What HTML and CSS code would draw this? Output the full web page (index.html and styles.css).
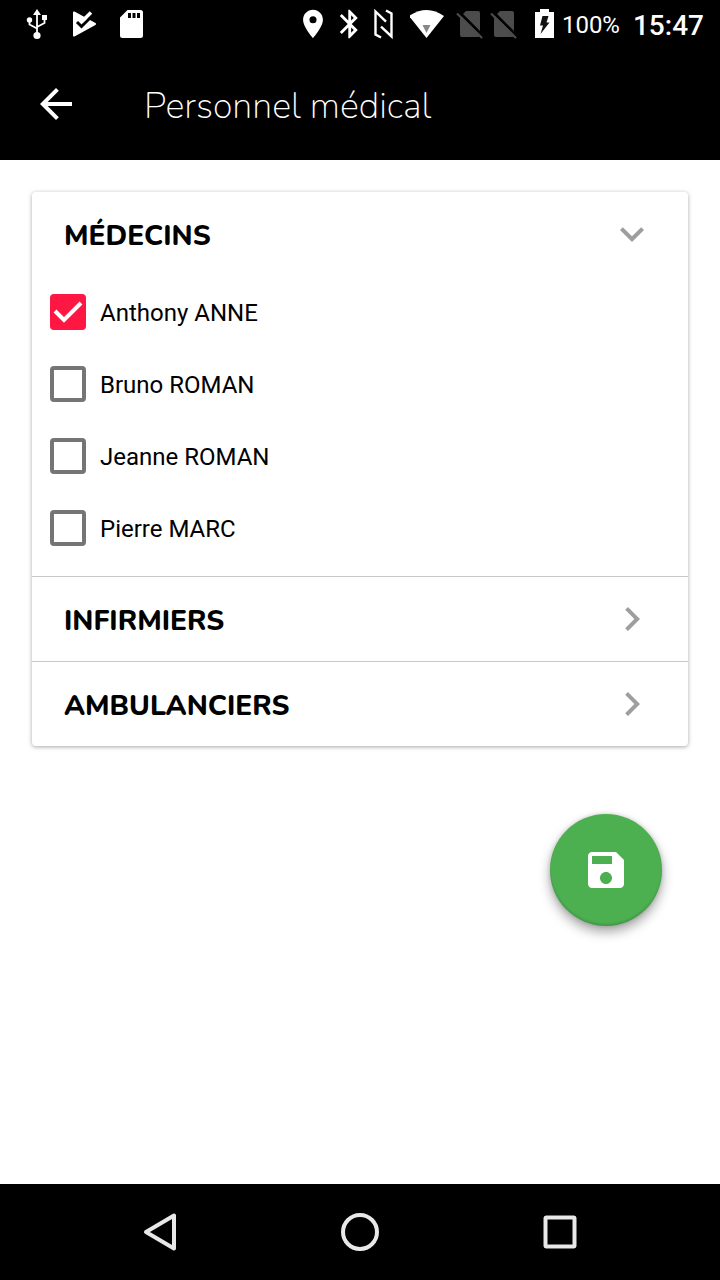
FILE: index.html
```html
<!DOCTYPE html>
<html lang="fr">

<head>
    <meta charset="UTF-8">
    <meta name="viewport" content="width=device-width, initial-scale=1.0">
    <title>Personnel médical</title>
    <link rel="stylesheet" href="styles.css">
</head>

<body>
    <div class="status-bar">
        <div class="notifications">
            <svg class="status-icon" viewBox="0 0 34 34">
                <path d="M17 2l4 6h-8z" fill="#fff"/>
                <path d="M17 6v22M9.500 13v4.500L17 21.500M24.500 11v5L17 20" fill="none" stroke="#fff" stroke-width="1.800"/>
                <circle cx="17" cy="28.500" r="3.600" fill="#fff"/>
                <circle cx="9.500" cy="13" r="2.700" fill="#fff"/>
                <path d="M22 8h5v5h-5z" fill="#fff"/>
            </svg>
            <svg class="status-icon" viewBox="0 0 34 34">
                <path d="M7 5.500L28 17 7 28.500z" fill="#fff" stroke="#fff" stroke-width="2" stroke-linejoin="round"/>
                <path d="M10 15l4.500 4.500L26 8" fill="none" stroke="#000" stroke-width="3"/>
                <path d="M14.500 14.800L24 5.500" fill="none" stroke="#fff" stroke-width="3.500"/>
            </svg>
            <svg class="status-icon" viewBox="0 0 34 34">
                <path fill="#fff" fill-rule="evenodd" d="M13.500 3H26.500Q29 3 29 5.500V28.500Q29 31 26.500 31H8.500Q6 31 6 28.500V10.500zM14 6v5h3V6zM18.500 6v5h3V6zM23 6v5h3V6z"/>
            </svg>
        </div>
        <div class="system">
            <div class="icon-group">
                <svg class="status-icon" viewBox="0 0 24 24">
                    <path fill="#fff" d="M12 2C8.130 2 5 5.130 5 9c0 5.250 7 13 7 13s7-7.750 7-13c0-3.870-3.130-7-7-7zm0 9.500a2.500 2.500 0 0 1 0-5 2.500 2.500 0 0 1 0 5z"/>
                </svg>
                <svg class="status-icon" viewBox="-0.500 0 24 24">
                    <path fill="#fff" d="M17.710 7.710L12 2h-1v7.590L6.410 5 5 6.410 10.590 12 5 17.590 6.410 19 11 14.410V22h1l5.710-5.710-4.300-4.290 4.300-4.290zM13 5.830l1.880 1.880L13 9.590V5.830zm1.880 10.460L13 18.170v-3.760l1.880 1.880z"/>
                </svg>
                <svg class="status-icon" viewBox="0 0 34 34">
                    <path d="M18 14.700L7.500 4.500V27.500L13 30.500M13 19.700L23.500 29.500V6.500L18 3.500" fill="none" stroke="#fff" stroke-width="2.400"/>
                </svg>
            </div>
            <svg class="status-icon" viewBox="0 0 34 34">
                <path d="M-1 9Q17-3 34 9L16.500 31z" fill="#fff"/>
                <path d="M12.500 18h8l-4 8z" fill="#888"/>
            </svg>
            <div class="icon-group sims">
                <svg class="status-icon" viewBox="0 0 34 34">
                    <path d="M14 4H26Q28 4 28 6V28Q28 30 26 30H10Q8 30 8 28V10z" fill="#4c4c4c"/>
                    <path d="M7 5L31 29" stroke="#000" stroke-width="3"/>
                    <path d="M5 6.500L30 31" stroke="#4c4c4c" stroke-width="2.200"/>
                </svg>
                <svg class="status-icon" viewBox="0 0 34 34">
                    <path d="M14 4H26Q28 4 28 6V28Q28 30 26 30H10Q8 30 8 28V10z" fill="#4c4c4c"/>
                    <path d="M7 5L31 29" stroke="#000" stroke-width="3"/>
                    <path d="M5 6.500L30 31" stroke="#4c4c4c" stroke-width="2.200"/>
                </svg>
            </div>
            <div class="battery">
                <svg class="status-icon" viewBox="0 0 34 34">
                    <path d="M7 5h5V2h9v3h5v26H7z" fill="#fff"/>
                    <path d="M14.500 9h6l-2 6.500h3L12.500 27l2.500-8.500h-3z" fill="#111"/>
                </svg>
                <span class="level">100%</span>
            </div>
            <span class="clock">15:47</span>
        </div>
    </div>

    <header class="app-bar">
        <button class="back" type="button" aria-label="Retour">
            <svg viewBox="0 0 24 24"><path fill="#fff" d="M20 11H7.830l5.590-5.590L12 4l-8 8 8 8 1.410-1.410L7.830 13H20v-2z"/></svg>
        </button>
        <h1>Personnel médical</h1>
    </header>

    <main>
        <form id="staffForm">
            <div class="card">
                <details open>
                    <summary>
                        <h2>MÉDECINS</h2>
                        <svg class="chevron" viewBox="0 0 24 24"><path d="M16.590 8.590L12 13.170 7.410 8.590 6 10l6 6 6-6z"/></svg>
                    </summary>
                    <div class="people">
                        <label><input type="checkbox" name="medecin" value="anne" checked><span>Anthony ANNE</span></label>
                        <label><input type="checkbox" name="medecin" value="broman"><span>Bruno ROMAN</span></label>
                        <label><input type="checkbox" name="medecin" value="jroman"><span>Jeanne ROMAN</span></label>
                        <label><input type="checkbox" name="medecin" value="marc"><span>Pierre MARC</span></label>
                    </div>
                </details>
                <details>
                    <summary>
                        <h2>INFIRMIERS</h2>
                        <svg class="chevron" viewBox="0 0 24 24"><path d="M10 6L8.590 7.410 13.170 12l-4.580 4.590L10 18l6-6z"/></svg>
                    </summary>
                </details>
                <details>
                    <summary>
                        <h2>AMBULANCIERS</h2>
                        <svg class="chevron" viewBox="0 0 24 24"><path d="M10 6L8.590 7.410 13.170 12l-4.580 4.590L10 18l6-6z"/></svg>
                    </summary>
                </details>
            </div>
            <button class="save" type="submit" aria-label="Enregistrer">
                <svg viewBox="0 0 24 24"><path fill="#fff" d="M17 3H5c-1.110 0-2 .9-2 2v14c0 1.100.89 2 2 2h14c1.100 0 2-.9 2-2V7l-4-4zm-5 16c-1.660 0-3-1.340-3-3s1.340-3 3-3 3 1.340 3 3-1.340 3-3 3zm3-10H5V5h10v4z"/></svg>
            </button>
        </form>
    </main>

    <nav class="nav-bar">
        <button type="button" aria-label="Précédent">
            <svg viewBox="0 0 48 48"><path d="M10 24L38 7.500V40.500z"/></svg>
        </button>
        <button type="button" aria-label="Accueil">
            <svg viewBox="0 0 48 48"><circle cx="24" cy="24" r="17"/></svg>
        </button>
        <button type="button" aria-label="Applications">
            <svg viewBox="0 0 48 48"><rect x="9.500" y="9.500" width="29" height="29" rx="1"/></svg>
        </button>
    </nav>
</body>

</html>
```
FILE: styles.css
```css
* {
    box-sizing: border-box;
}

body {
    display: flex;
    flex-direction: column;
    min-height: 100vh;
    margin: 0;
    background-color: #fff;
    color: #000;
    font-family: Roboto, sans-serif;
}

button {
    display: flex;
    align-items: center;
    justify-content: center;
    border: none;
    padding: 0;
    background: none;
    cursor: pointer;
}

h1,
h2 {
    margin: 0;
    padding-top: 4px;
    font-family: Nunito, "Open Sans", sans-serif;
}

/* Status bar */
.status-bar {
    display: flex;
    justify-content: space-between;
    height: 48px;
    padding: 0 16px 0 20px;
    background-color: #000;
    color: #fff;
}

.notifications,
.system,
.icon-group,
.battery {
    display: flex;
    align-items: center;
}

.notifications {
    gap: 13px;
}

.system {
    gap: 8px;
}

.icon-group {
    gap: 2px;
}

.sims {
    gap: 0;
}

.status-icon {
    width: 34px;
    height: 34px;
}

.level {
    padding-top: 2px;
    font-size: 24px;
}

.clock {
    padding: 2px 0 0 5px;
    font-size: 28px;
    font-weight: 500;
}

/* App bar */
.app-bar {
    display: flex;
    align-items: center;
    gap: 64px;
    height: 112px;
    padding: 0 32px;
    background-color: #000;
    color: #fff;
}

.back svg {
    width: 48px;
    height: 48px;
}

.app-bar h1 {
    font-size: 36px;
    font-weight: 200;
}

/* Staff list */
main {
    flex: 1;
    padding: 32px;
}

.card {
    border-radius: 4px;
    background-color: #fff;
    box-shadow: 0 1px 4px rgba(0, 0, 0, 0.35);
}

details + details {
    border-top: 1px solid #c8c8c8;
}

summary {
    display: flex;
    align-items: center;
    justify-content: space-between;
    height: 84px;
    padding: 0 32px;
    list-style: none;
    cursor: pointer;
}

summary h2 {
    font-size: 28px;
    font-weight: 800;
}

.chevron {
    width: 48px;
    height: 48px;
    fill: #9e9e9e;
}

.people {
    padding: 0 18px 12px;
}

.people label {
    display: flex;
    align-items: center;
    gap: 14px;
    height: 72px;
    font-size: 24px;
}

.people span {
    padding-top: 2px;
}

.people input {
    appearance: none;
    width: 36px;
    height: 36px;
    margin: 0;
    border: 4px solid #757575;
    border-radius: 4px;
}

.people input:checked {
    border: none;
    background: #ff1744 url("data:image/svg+xml,%3Csvg xmlns='http://www.w3.org/2000/svg' viewBox='0 0 36 36'%3E%3Cpath d='M5 17l9 9L31 9' fill='none' stroke='%23fff' stroke-width='4'/%3E%3C/svg%3E");
}

.save {
    width: 112px;
    height: 112px;
    margin: 68px 26px 0 auto;
    border-radius: 50%;
    background-color: #4caf50;
    box-shadow: 0 6px 12px rgba(0, 0, 0, 0.35), 0 0 4px rgba(0, 0, 0, 0.15), inset 0 -2px 2px rgba(0, 0, 0, 0.12);
}

.save svg {
    width: 48px;
    height: 48px;
}

/* Navigation bar */
.nav-bar {
    display: flex;
    height: 96px;
    padding: 0 60px;
    background-color: #000;
}

.nav-bar button {
    flex: 1;
}

.nav-bar svg {
    width: 48px;
    height: 48px;
    fill: none;
    stroke: #e8e8e8;
    stroke-width: 4;
    stroke-linejoin: round;
}
```
